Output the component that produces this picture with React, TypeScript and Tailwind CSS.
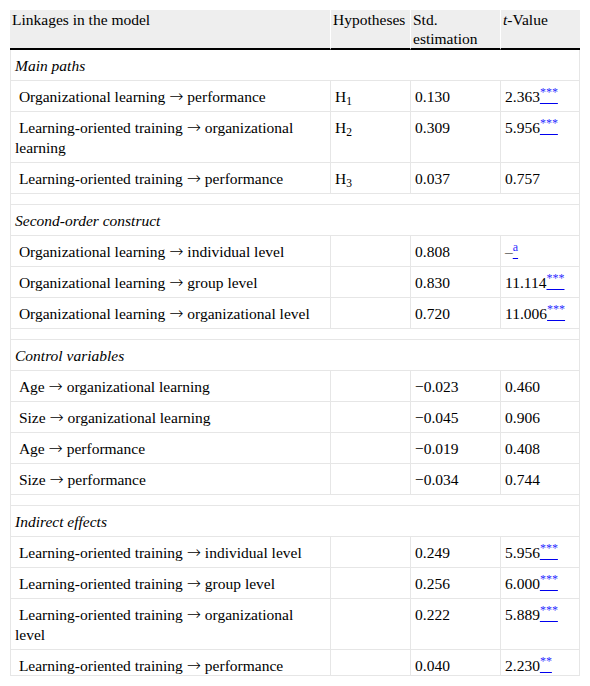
type DataRow = {
  kind: "data";
  label: string;
  hyp?: string;
  est: string;
  t: string;
  sig?: string;
};
type SectionRow = { kind: "section"; title: string };
type SpacerRow = { kind: "spacer" };
type Row = DataRow | SectionRow | SpacerRow;

const ROWS: Row[] = [
  { kind: "section", title: "Main paths" },
  { kind: "data", label: "Organizational learning → performance", hyp: "1", est: "0.130", t: "2.363", sig: "***" },
  { kind: "data", label: "Learning-oriented training → organizational learning", hyp: "2", est: "0.309", t: "5.956", sig: "***" },
  { kind: "data", label: "Learning-oriented training → performance", hyp: "3", est: "0.037", t: "0.757" },
  { kind: "spacer" },
  { kind: "section", title: "Second-order construct" },
  { kind: "data", label: "Organizational learning → individual level", est: "0.808", t: "–", sig: "a" },
  { kind: "data", label: "Organizational learning → group level", est: "0.830", t: "11.114", sig: "***" },
  { kind: "data", label: "Organizational learning → organizational level", est: "0.720", t: "11.006", sig: "***" },
  { kind: "spacer" },
  { kind: "section", title: "Control variables" },
  { kind: "data", label: "Age → organizational learning", est: "−0.023", t: "0.460" },
  { kind: "data", label: "Size → organizational learning", est: "−0.045", t: "0.906" },
  { kind: "data", label: "Age → performance", est: "−0.019", t: "0.408" },
  { kind: "data", label: "Size → performance", est: "−0.034", t: "0.744" },
  { kind: "spacer" },
  { kind: "section", title: "Indirect effects" },
  { kind: "data", label: "Learning-oriented training → individual level", est: "0.249", t: "5.956", sig: "***" },
  { kind: "data", label: "Learning-oriented training → group level", est: "0.256", t: "6.000", sig: "***" },
  { kind: "data", label: "Learning-oriented training → organizational level", est: "0.222", t: "5.889", sig: "***" },
  { kind: "data", label: "Learning-oriented training → performance", est: "0.040", t: "2.230", sig: "**" },
];

// arrows fall back to a tiny glyph in Liberation Serif, so set them in DejaVu
function Label({ text }: { text: string }) {
  const parts = text.split("→");
  return (
    <>
      {"\u00a0"}
      {parts.map((p, i) => (
        <span key={i}>
          {i > 0 && <span className="font-['DejaVu_Sans'] font-light text-[17px] leading-[0]">→</span>}
          {p}
        </span>
      ))}
    </>
  );
}

function SigLink({ mark }: { mark: string }) {
  return (
    <a href="#" className="text-[#2b2bff] underline decoration-[#0000ee]">
      <sup className="static align-super text-[12px] leading-[0]">{mark}</sup>
    </a>
  );
}

export default function App() {
  const cell = "border-r border-b border-[#e6e6e6] align-top px-[4px] pt-[6px] pb-[4px]";

  return (
    <div className="bg-white min-h-[686px] pt-[10px] pl-[10px] font-['Liberation_Serif',serif] text-[15.5px] leading-[20px] text-black">
      {/* the screenshot cuts the table off inside its last row */}
      <div className="w-[570px] h-[666px] overflow-hidden border-b border-[#e6e6e6]">
        <table className="w-[570px] border-separate border-spacing-0 table-fixed">
          <colgroup>
            <col className="w-[321px]" />
            <col className="w-[80px]" />
            <col className="w-[90px]" />
            <col className="w-[79px]" />
          </colgroup>
          <thead>
            <tr>
              {["Linkages in the model", "Hypotheses", "Std. estimation"].map((h) => (
                <th
                  key={h}
                  className="bg-[#eeeeee] text-left font-normal align-top px-[2px] py-0 leading-[19px] border-b-2 border-b-black border-r border-r-white"
                >
                  {h}
                </th>
              ))}
              <th className="bg-[#eeeeee] text-left font-normal align-top px-[2px] py-0 leading-[19px] border-b-2 border-b-black">
                <i>t</i>-Value
              </th>
            </tr>
          </thead>
          <tbody>
            {ROWS.map((row, i) => {
              if (row.kind === "spacer") {
                return (
                  <tr key={i}>
                    <td colSpan={4} className="h-[11px] p-0 border-l border-r border-b border-[#e6e6e6]" />
                  </tr>
                );
              }
              if (row.kind === "section") {
                return (
                  <tr key={i}>
                    <td colSpan={4} className={`${cell} border-l italic`}>
                      {row.title}
                    </td>
                  </tr>
                );
              }
              return (
                <tr key={i}>
                  <td className={`${cell} border-l`}>
                    <Label text={row.label} />
                  </td>
                  <td className={cell}>
                    {row.hyp && (
                      <>
                        H<sub className="text-[11.5px] leading-[0]">{row.hyp}</sub>
                      </>
                    )}
                  </td>
                  <td className={cell}>{row.est}</td>
                  <td className={cell}>
                    {row.t}
                    {row.sig && <SigLink mark={row.sig} />}
                  </td>
                </tr>
              );
            })}
          </tbody>
        </table>
      </div>
    </div>
  );
}
